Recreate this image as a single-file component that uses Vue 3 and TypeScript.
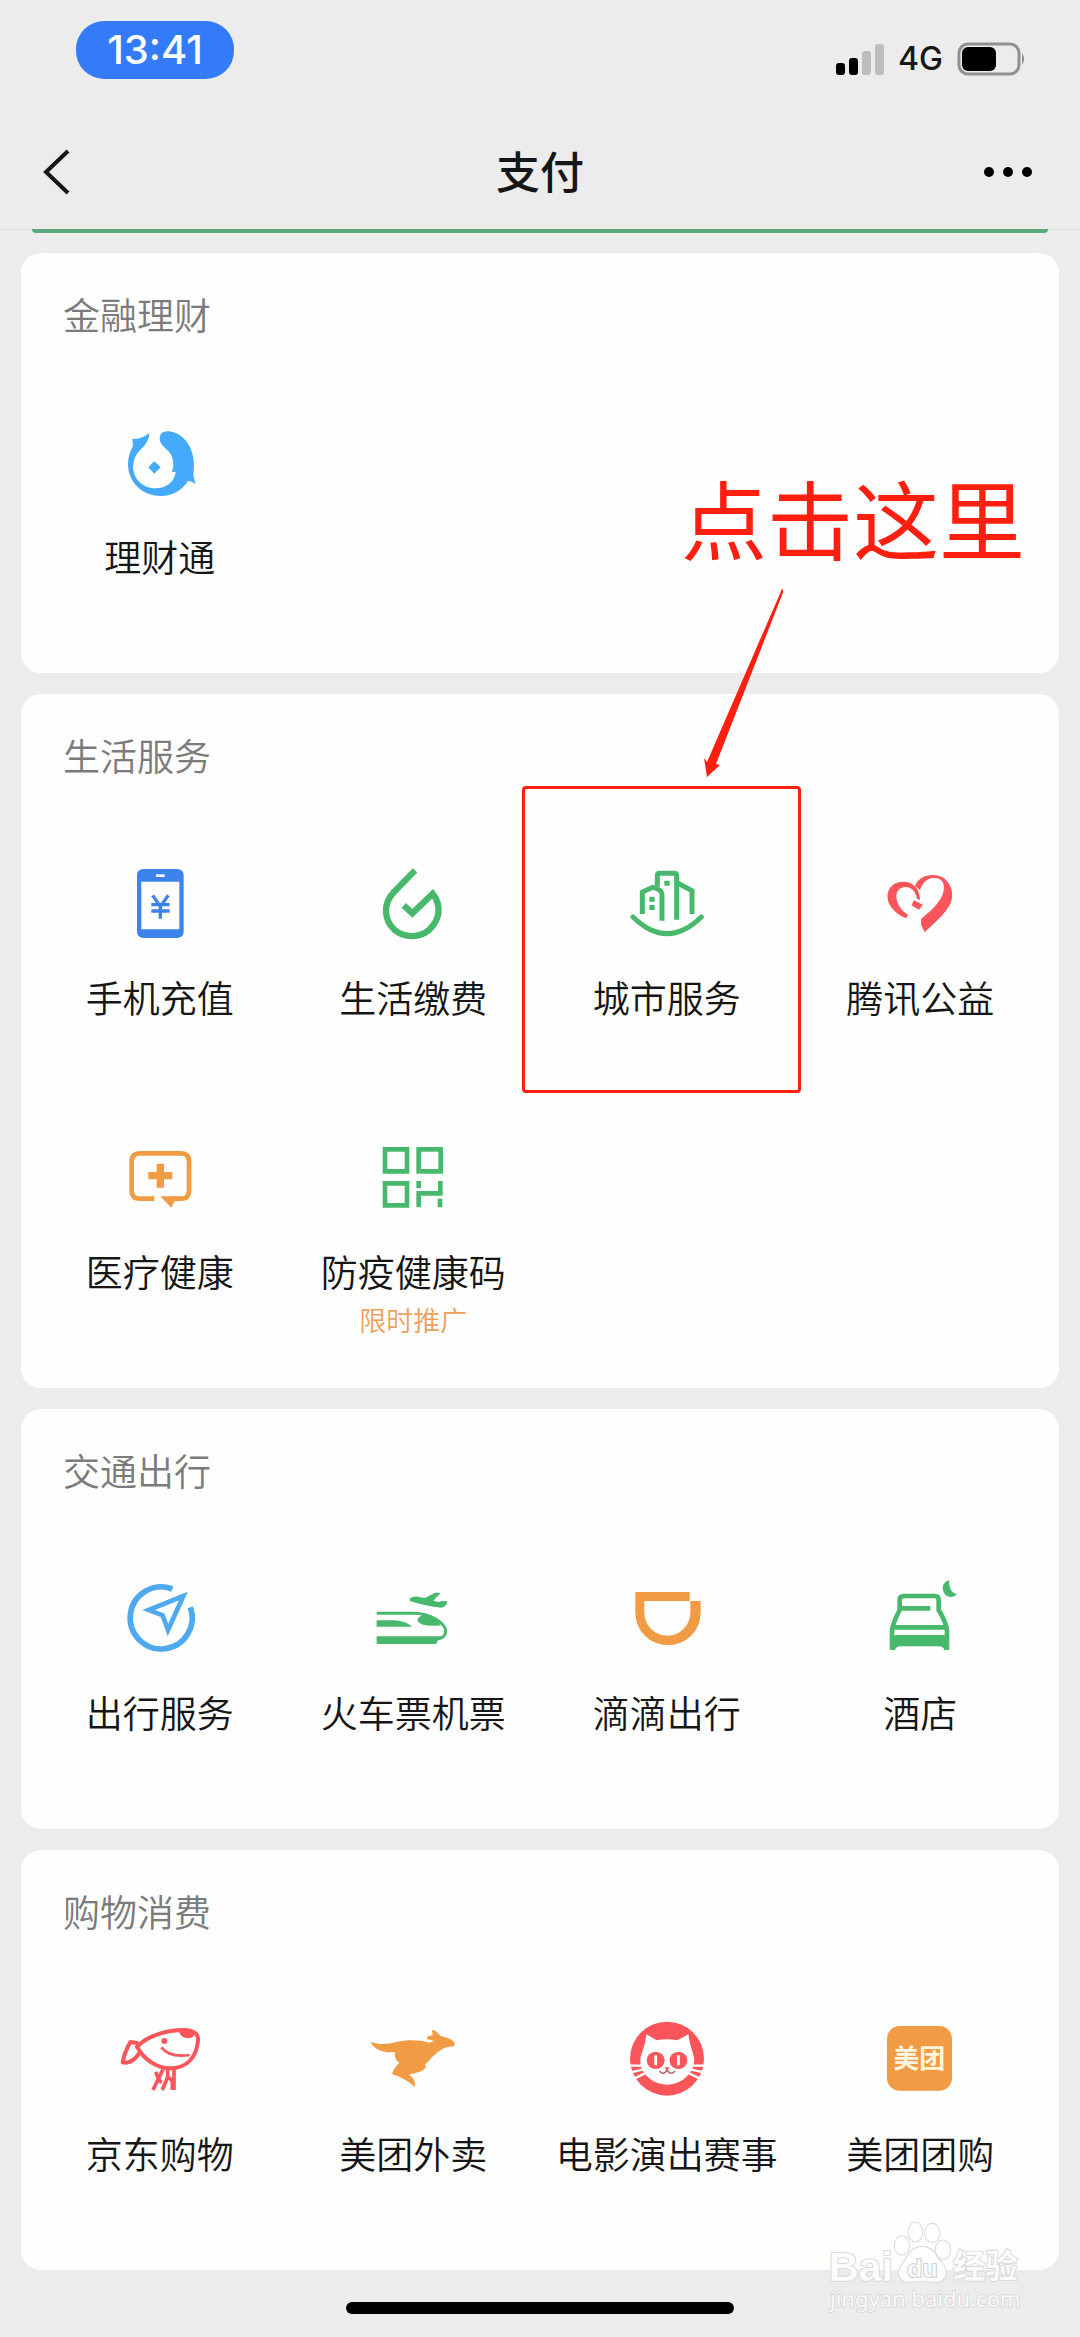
<script setup lang="ts">
interface Service {
  label: string
  note?: string
  marked?: boolean
  viewBox: string
  art: string
}

interface Section {
  title: string
  services: Service[]
}

const green = '#48b96c'
const orange = '#f29b45'
const red = '#f9555a'

const sections: Section[] = [
  {
    title: '金融理财',
    services: [
      {
        label: '理财通',
        viewBox: '293 516 252 252',
        art: `<g fill="#45aafb">
          <path d="M336 570 Q366 570 387 552 Q388 578 360 602 Q338 624 338 655 C340 692 368 718 404 718 C440 718 464 696 466 668 L454 669 Q461 658 458 636 C455 600 417 596 418 566 Q420 547 442 547 C486 549 519 590 521 645 Q521 660 519 676 Q521 690 525 706 Q514 695 503 696 C486 724 456 741 422 741 C366 741 323 700 323 645 Q323 618 338 590 Z"/>
          <path d="M402 637 L421 655 L402 674 L384 655 Z"/></g>`
      }
    ]
  },
  {
    title: '生活服务',
    services: [
      {
        label: '手机充值',
        viewBox: '173 66 252 252',
        art: `<path fill="#3c84ec" fill-rule="evenodd" d="M250 87 H350 Q370 87 370 107 V274 Q370 294 350 294 H250 Q230 294 230 274 V107 Q230 87 250 87 Z M243 125 V268 H357 V125 Z"/>
          <path d="M287 107 H313" stroke="#fff" stroke-width="8"/>
          <path d="M277 166 L300 200 L324 166 M300 198 V236 M273 194 H328 M273 213 H328" fill="none" stroke="#3c84ec" stroke-width="10"/>`
      },
      {
        label: '生活缴费',
        viewBox: '934 66 252 252',
        art: `<path fill="none" stroke="${green}" stroke-width="19" d="M1066 91 L1003 156 C968 192 974 240 1003 268 C1034 296 1082 294 1110 268 C1142 236 1146 196 1119 161 L1058 220 L1032 196"/>`
      },
      {
        label: '城市服务',
        marked: true,
        viewBox: '374 276 252 252',
        art: `<g fill="none" stroke="${green}" stroke-width="15">
          <path d="M471 350 V317 Q471 310 478 310 H522 Q529 310 529 317 V449"/>
          <path d="M426 432 V366 L457 352 Q485 358 485 374 V452"/>
          <path d="M533 340 L575 362 V432"/>
          <path stroke-linecap="round" d="M398 441 Q500 541 603 441"/></g>
          <path fill="${green}" d="M447 380 h16 v15 h-16z M447 405 h16 v15 h-16z M492 332 h16 v15 h-16z"/>`
      },
      {
        label: '腾讯公益',
        viewBox: '1135 276 252 252',
        art: `<g fill="${red}" transform="scale(1.0714 1)">
          <path d="M1138 445 C1102 428 1086 402 1086 380 C1086 350 1107 335 1130 335 C1160 335 1176 357 1177 390 L1169 387 C1165 364 1152 351 1137 351 C1118 351 1109 367 1111 384 C1113 404 1125 422 1144 435 Z"/>
          <path d="M1163 348 C1172 324 1192 314 1215 315 C1246 316 1267 342 1267 375 C1267 408 1244 434 1190 487 L1180 464 V447 C1218 414 1244 386 1244 352 C1244 336 1235 325 1220 324 C1198 321 1184 338 1177 360 Z"/>
          <path d="M1160 391 L1185 404 L1174 419 L1153 406 Z"/></g>`
      },
      {
        label: '医疗健康',
        viewBox: '173 48 252 252',
        art: `<path fill="none" stroke="${orange}" stroke-width="14" d="M282 236 H238 Q214 236 214 212 V124 Q214 100 238 100 H362 Q386 100 386 124 V212 Q386 236 362 236 H330"/>
          <path fill="${orange}" d="M300 229 H350 L333 263 Z M289 131 h22 v25 h25 v22 h-25 v25 h-22 v-25 h-25 v-22 h25 Z"/>`
      },
      {
        label: '防疫健康码',
        note: '限时推广',
        viewBox: '934 48 252 252',
        art: `<path fill="none" stroke="${green}" stroke-width="14" d="M976 88 h66 v66 h-66 Z M1077 88 h66 v66 h-66 Z M976 190 h66 v66 h-66 Z M1077 262 V220 H1142 V183 M1077 183 V205 M1141 236 V262"/>`
      }
    ]
  },
  {
    title: '交通出行',
    services: [
      {
        label: '出行服务',
        viewBox: '173 51 252 252',
        art: `<g fill="none" stroke="#4fa9ef"><path stroke-width="17" d="M336 87 A93 93 0 1 0 390 142"/>
          <path stroke-width="14" d="M369 108 L265 150 L307 166 L323 210 Z"/></g>`
      },
      {
        label: '火车票机票',
        viewBox: '934 51 252 252',
        art: `<path fill="none" stroke="${green}" stroke-width="9" d="M951 160 H1062 C1112 160 1158 190 1158 214 C1158 230 1146 236 1128 238"/>
          <path fill="${green}" d="M1074 178 Q1080 164 1098 164 Q1126 170 1144 196 Q1088 202 1074 184 Z M951 181 H1005 Q1040 184 1057 200 H951Z M951 229 H1148 Q1134 238 1130 252 H951Z M1051 115 Q1060 108 1075 110 L1096 114 L1126 98 L1143 98 L1121 122 L1136 126 Q1148 121 1163 124 Q1162 140 1145 143 Q1098 139 1051 123 Z"/>`
      },
      {
        label: '滴滴出行',
        viewBox: '254 51 252 252',
        art: `<path fill="${orange}" d="M285 96 H448 V123 H312 V158 A69 69 0 0 0 450 158 V123 H481 V158 A98 98 0 0 1 285 158 Z"/>`
      },
      {
        label: '酒店',
        viewBox: '1015 51 252 252',
        art: `<g fill="none" stroke="${green}" stroke-width="14"><path d="M1057 268 V212 Q1059 190 1080 150 V120 Q1080 108 1092 108 H1185 Q1197 108 1197 120 V150 Q1221 190 1222 212 V268"/>
          <path d="M1082 145 H1172 M1060 202 H1220"/></g>
          <path fill="${green}" d="M1052 232 Q1060 225 1072 225 H1208 Q1220 225 1228 232 V270 H1214 Q1210 259 1200 259 H1080 Q1070 259 1066 270 H1052 Z M1228 60 Q1208 68 1209 87 Q1212 108 1233 111 Q1244 112 1252 103 Q1226 96 1228 60 Z"/>`
      }
    ]
  },
  {
    title: '购物消费',
    services: [
      {
        label: '京东购物',
        viewBox: '173 84 252 252',
        art: `<g fill="none" stroke="${red}" stroke-width="12" stroke-linejoin="round">
          <path d="M230 170 C262 136 322 120 370 120 C404 121 415 134 413 152 C408 200 382 235 328 235 C286 234 250 206 230 170 Z"/>
          <path d="M234 160 L210 156 Q192 188 187 217 Q214 224 238 188"/>
          <path stroke-width="8" d="M303 172 Q328 204 388 195"/>
          <path stroke-width="11" d="M286 246 L294 266 L278 300 M308 238 L294 268 L304 278 M322 240 V262 L306 300 M341 236 V300 M326 262 L336 274 V300"/></g>
          <circle cx="312" cy="153" r="9" fill="${red}"/>
          <path fill="${red}" d="M356 124 Q382 116 406 130 Q400 145 380 145 Q360 142 356 124 Z"/>`
      },
      {
        label: '美团外卖',
        viewBox: '934 84 252 252',
        art: `<path fill="${orange}" d="M932 155 C960 165 985 163 1010 156 C1045 148 1080 150 1108 158 L1124 153 L1102 147 L1104 139 L1119 136 L1117 120 L1127 122 L1143 138 C1162 142 1180 150 1185 158 L1184 168 L1160 172 C1142 178 1122 196 1110 210 L1096 224 L1099 232 C1088 246 1070 249 1048 254 C1062 262 1068 275 1065 291 C1050 278 1030 262 998 253 C998 240 1010 228 1019 218 C1007 210 1004 200 1006 186 C975 190 944 180 932 155 Z"/>`
      },
      {
        label: '电影演出赛事',
        viewBox: '254 84 252 252',
        art: `<circle cx="380" cy="206" r="111" fill="${red}"/><g transform="scale(1.033 1)">
          <path fill="#fff" d="M308 133 L338 151 Q368 145 398 151 L430 133 Q434 165 442 185 Q452 215 440 240 Q415 282 368 284 Q320 282 296 240 Q284 215 296 185 Q306 160 308 133 Z"/>
          <path stroke="#fff" stroke-width="7" d="M258 227 H298 M262 247 L300 238 M272 266 L304 250 M478 227 H438 M474 247 L436 238 M464 266 L432 250"/>
          <circle cx="335" cy="211" r="26" fill="${red}"/><circle cx="401" cy="211" r="26" fill="${red}"/>
          <path stroke="#fff" stroke-width="8" d="M335 196 V226 M401 196 V226"/>
          <path fill="none" stroke="#b5686c" stroke-width="5" d="M346 243 Q358 258 368 240 Q378 258 391 243"/>
          <path fill="${red}" d="M361 232 h14 l-7 11 z"/></g>`
      },
      {
        label: '美团团购',
        viewBox: '1015 84 252 252',
        art: `<rect x="1042" y="108" width="195" height="194" rx="38" fill="${orange}"/>
          <text x="1139" y="235" text-anchor="middle" font-size="78" font-weight="700" fill="#fff5dc">美团</text>`
      }
    ]
  }
]
</script>

<template>
  <div class="page">
    <header class="header">
      <div class="status">
        <span class="time">13:41</span>
        <div class="status-right">
          <svg class="signal" viewBox="0 0 48 32" aria-hidden="true">
            <rect x="0" y="20" width="9" height="12" rx="3" />
            <rect x="13" y="15" width="9" height="17" rx="3" />
            <rect x="26" y="8" width="9" height="24" rx="3" fill="#bdbdbd" />
            <rect x="39" y="1" width="9" height="31" rx="3" fill="#bdbdbd" />
          </svg>
          <span class="network">4G</span>
          <svg class="battery" viewBox="0 0 70 34" aria-hidden="true">
            <rect x="2" y="2" width="60" height="30" rx="9" fill="none" stroke="#909090" stroke-width="3" />
            <rect x="5" y="5" width="34" height="24" rx="6" />
            <path d="M65 11 Q69 17 65 23 Z" fill="#8a8a8a" />
          </svg>
        </div>
      </div>
      <nav class="nav">
        <button class="nav-button" type="button" aria-label="返回">
          <svg viewBox="0 0 32 48" width="32" height="48">
            <path d="M28 3 L6 24 L28 45" fill="none" stroke="#161616" stroke-width="4" />
          </svg>
        </button>
        <h1 class="title">支付</h1>
        <button class="nav-button nav-button-end" type="button" aria-label="更多">
          <svg viewBox="0 0 48 12" width="48" height="12">
            <circle cx="5" cy="6" r="5" /><circle cx="24" cy="6" r="5" /><circle cx="43" cy="6" r="5" />
          </svg>
        </button>
      </nav>
    </header>
    <div class="banner-edge"></div>

    <main class="sections">
      <section v-for="section in sections" :key="section.title" class="card">
        <h2 class="card-title">{{ section.title }}</h2>
        <ul class="grid">
          <li v-for="service in section.services" :key="service.label" class="cell">
            <button class="service" type="button">
              <svg class="icon" :viewBox="service.viewBox" aria-hidden="true" v-html="service.art"></svg>
              <span class="label">{{ service.label }}</span>
              <span v-if="service.note" class="note">{{ service.note }}</span>
            </button>
            <div v-if="service.marked" class="callout">
              <span class="callout-text">点击这里</span>
              <svg class="callout-arrow" viewBox="0 0 80 190" aria-hidden="true">
                <path d="M79 0 L81 1 L13 175 L17 176 L4 188 L1 169 L4 173 Z" fill="#ff1f10" />
              </svg>
            </div>
          </li>
        </ul>
      </section>
    </main>

    <footer class="footer">
      <div class="home-bar"></div>
    </footer>

    <svg class="watermark" viewBox="135 90 600 285" aria-hidden="true">
      <g fill="#fff" fill-opacity="0.85" stroke="#d6d6d6" stroke-width="5" paint-order="stroke">
        <text x="146" y="273" font-size="124" font-weight="700">Bai</text>
        <ellipse cx="366" cy="166" rx="22" ry="28" />
        <ellipse cx="406" cy="126" rx="21" ry="29" />
        <ellipse cx="457" cy="129" rx="22" ry="28" />
        <ellipse cx="489" cy="179" rx="22" ry="28" />
        <path d="M388 188 Q428 152 464 188 Q470 204 488 220 Q512 262 476 277 Q428 270 380 277 Q342 262 366 222 Q382 206 388 188 Z" />
        <text x="382" y="261" font-size="74" font-weight="700" stroke="#c8c8c8">du</text>
        <text x="518" y="264" font-size="98" font-weight="700">经验</text>
        <text class="watermark-url" x="150" y="351" font-size="66">jingyan.baidu.com</text>
      </g>
    </svg>
  </div>
</template>

<style>
body {
  margin: 0;
  background: #ececec;
}
</style>

<style scoped>
.page {
  position: relative;
  min-height: 100vh;
  background: #ececec;
  color: #161616;
  font-family: "Liberation Sans", "Noto Sans CJK SC", sans-serif;
}

button {
  padding: 0;
  border: 0;
  background: none;
  color: inherit;
  font: inherit;
}

.header {
  border-bottom: 1px solid #dedede;
}

.status {
  display: flex;
  justify-content: space-between;
  align-items: flex-start;
  height: 93px;
  padding: 21px 53px 0 76px;
}

.time {
  width: 158px;
  border-radius: 28px;
  background: #347bfb;
  color: #fff;
  font-family: Inter, sans-serif;
  font-size: 40px;
  font-weight: 500;
  line-height: 58px;
  text-align: center;
}

.status-right {
  display: flex;
  align-items: center;
  height: 36px;
  padding-top: 20px;
}

.signal {
  width: 48px;
  height: 32px;
}

.network {
  margin: 0 14px;
  font-family: Inter, sans-serif;
  font-size: 32px;
  font-weight: 500;
  line-height: 36px;
}

.battery {
  width: 70px;
  height: 34px;
}

.nav {
  display: flex;
  justify-content: space-between;
  align-items: center;
  height: 115px;
  padding: 0 48px 0 40px;
}

.nav-button {
  display: flex;
  width: 56px;
}

.nav-button-end {
  justify-content: flex-end;
  width: 48px;
}

.title {
  margin: 0;
  padding-top: 4px;
  font-size: 44px;
  font-weight: 500;
  line-height: 60px;
}

.banner-edge {
  height: 4px;
  margin: -1px 32px 0;
  border-radius: 0 0 4px 4px;
  background: #5aa87c;
}

.sections {
  display: flex;
  flex-direction: column;
  gap: 21px;
  padding: 20px 21px 0;
}

.card {
  border-radius: 20px;
  background: #fefefe;
}

.card-title {
  margin: 0;
  padding: 40px 42px 56px;
  color: #7b7b7b;
  font-size: 37px;
  font-weight: 350;
  line-height: 50px;
}

.grid {
  display: grid;
  grid-template-columns: repeat(4, 1fr);
  grid-auto-rows: 274px;
  margin: 0;
  padding: 0 12px;
  list-style: none;
}

.cell {
  position: relative;
}

.service {
  display: flex;
  flex-direction: column;
  align-items: center;
  width: 100%;
  height: 100%;
  padding-top: 22px;
}

.icon {
  width: 84px;
  height: 84px;
}

.label {
  margin-top: 30px;
  font-size: 37px;
  font-weight: 350;
  line-height: 50px;
  white-space: nowrap;
}

.note {
  margin-top: 4px;
  color: #eba25c;
  font-size: 27px;
  font-weight: 350;
  line-height: 36px;
}

/* Red guide drawn over the highlighted service */
.callout {
  position: absolute;
  top: -54px;
  left: -18px;
  box-sizing: border-box;
  width: 279px;
  height: 307px;
  border: 3px solid #ff1f10;
  border-radius: 4px;
  pointer-events: none;
}

.callout-text {
  position: absolute;
  bottom: 516px;
  left: 156px;
  color: #ff1f10;
  font-size: 86px;
  line-height: 100px;
  white-space: nowrap;
}

.callout-arrow {
  position: absolute;
  bottom: 311px;
  left: 178px;
  width: 80px;
  height: 190px;
}

.footer {
  display: flex;
  justify-content: center;
  padding: 32px 0 23px;
}

.home-bar {
  width: 36%;
  height: 12px;
  border-radius: 6px;
  background: #000;
}

.watermark {
  position: absolute;
  right: 55px;
  bottom: 22px;
  width: 200px;
  height: 95px;
}

.watermark-url {
  font-family: "Noto Sans", sans-serif;
}
</style>
